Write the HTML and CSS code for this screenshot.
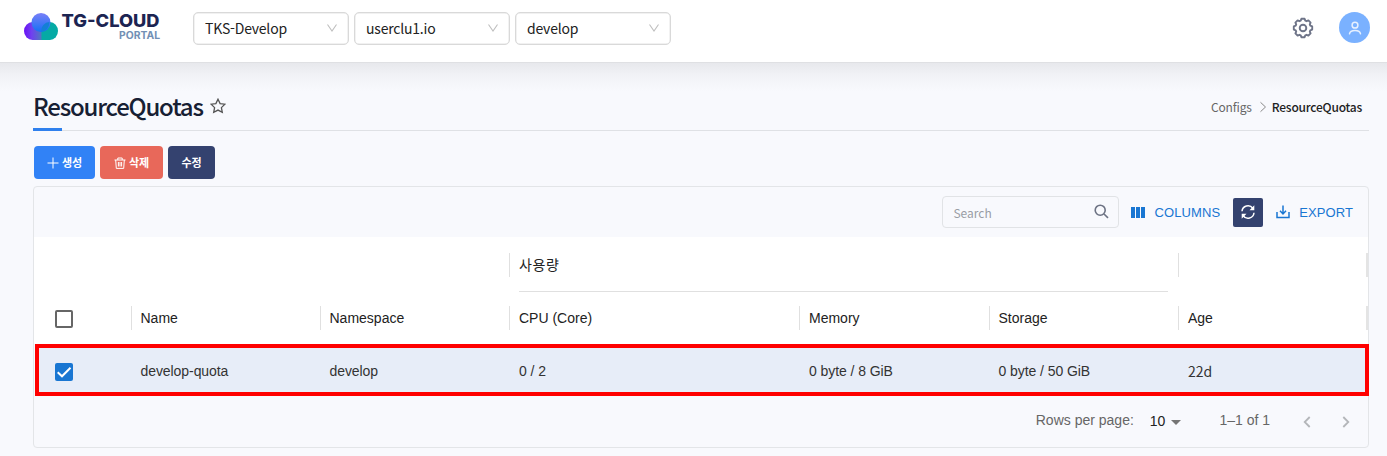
FILE: index.html
```html
<!DOCTYPE html>
<html lang="ko">
<head>
<meta charset="utf-8">
<title>ResourceQuotas</title>
<link rel="stylesheet" href="styles.css">
</head>
<body>
<header class="topbar">
  <svg class="logo" width="138" height="30" viewBox="0 0 138 30">
    <defs>
      <linearGradient id="lg1" x1="0" x2="1"><stop offset="0" stop-color="#6a10f5"/><stop offset=".4" stop-color="#7040f0"/><stop offset="1" stop-color="#4a80b8"/></linearGradient>
      <linearGradient id="lg2" x1="0" y1="0" x2="0" y2="1"><stop offset="0" stop-color="#7a80f8"/><stop offset="1" stop-color="#1470f5"/></linearGradient>
    </defs>
    <path d="M8.500 10H19V28H8.500A8.500 9 0 0 1 8.500 10Z" fill="url(#lg1)"/>
    <path d="M17.500 28V18L22 10H26A8 9 0 0 1 26 28Z" fill="#05aaa5"/>
    <circle cx="17" cy="10.500" r="9.500" fill="url(#lg2)"/>
    <path d="M17.200 19.800A8.500 9 0 0 1 25.500 10A9.500 9.500 0 0 1 17.200 19.800Z" fill="#147fd6"/>
    <text class="logo-name" x="37.500" y="14.800" textLength="98" lengthAdjust="spacingAndGlyphs">TG-CLOUD</text>
    <text class="logo-sub" x="95" y="26.800" textLength="41" lengthAdjust="spacingAndGlyphs">PORTAL</text>
  </svg>
  <div class="selects">
    <div class="select"><span>TKS-Develop</span><svg width="12" height="12" viewBox="0 0 12 12"><path d="M1.500 2.500L6 9L10.500 2.500"/></svg></div>
    <div class="select"><span>userclu1.io</span><svg width="12" height="12" viewBox="0 0 12 12"><path d="M1.500 2.500L6 9L10.500 2.500"/></svg></div>
    <div class="select"><span>develop</span><svg width="12" height="12" viewBox="0 0 12 12"><path d="M1.500 2.500L6 9L10.500 2.500"/></svg></div>
  </div>
  <svg class="gear" width="22" height="22" viewBox="0 0 22 22">
    <path d="M9.400 1.800h3.200l.7 1.900 1.300.5 1.800-.8 2.200 2.200-.8 1.800.5 1.300 1.900.7v3.200l-1.900.7-.5 1.300.8 1.800-2.200 2.200-1.800-.8-1.300.5-.7 1.900H9.400l-.7-1.900-1.300-.5-1.800.8-2.200-2.200.8-1.800-.5-1.300-1.900-.7V9.400l1.900-.7.5-1.300-.8-1.800 2.200-2.200 1.800.8 1.300-.5z"/>
    <circle cx="11" cy="11" r="3.300"/>
  </svg>
  <div class="avatar"><svg width="14" height="14" viewBox="0 0 14 14"><circle cx="7" cy="4.200" r="2.900"/><path d="M1.500 12.800C2.200 8.300 11.800 8.300 12.500 12.800"/></svg></div>
</header>
<main class="content">
  <div class="page-head">
    <h1>ResourceQuotas</h1>
    <svg class="star" width="16" height="16" viewBox="0 0 16 16"><path d="M8 1.200L10.100 5.600L14.900 6.200L11.400 9.600L12.300 14.400L8 12.100L3.700 14.400L4.600 9.600L1.100 6.200L5.900 5.600Z"/></svg>
    <nav class="crumbs"><span>Configs</span><svg width="8" height="12" viewBox="0 0 8 12"><path d="M1.500 1.300L6.500 6L1.500 10.700"/></svg><b>ResourceQuotas</b></nav>
  </div>
  <div class="actions">
    <button class="btn create"><svg width="12" height="12" viewBox="0 0 12 12"><path d="M6 .5V11.500M.5 6H11.500"/></svg><span>생성</span></button>
    <button class="btn remove"><svg width="12" height="12" viewBox="0 0 12 12"><path d="M.5 3H11.500M3.800 3V1H8.200V3M1.700 3L2.300 11.400H9.700L10.300 3M4.400 5V9.500M6 5V9.500M7.600 5V9.500"/></svg><span>삭제</span></button>
    <button class="btn edit"><span>수정</span></button>
  </div>
  <section class="card">
    <div class="toolbar">
      <div class="search"><span>Search</span><svg width="15" height="15" viewBox="0 0 15 15"><circle cx="6.200" cy="6.200" r="5"/><path d="M10 10L14 13.800"/></svg></div>
      <div class="tool columns"><svg width="14" height="11" viewBox="0 0 14 11"><path d="M0 0H4V11H0ZM5 0H9V11H5ZM10 0H14V11H10Z" fill="#1976d2"/></svg><span>COLUMNS</span></div>
      <div class="refresh"><svg width="16" height="16" viewBox="0 0 16 16"><path d="M2 7.200A6 6 0 0 1 12.800 4.200M14 8.800A6 6 0 0 1 3.200 11.800"/><path class="solid" d="M14.300 1.300V6.200H9.500ZM1.700 14.700V9.800H6.500Z"/></svg></div>
      <div class="tool export"><svg width="14" height="14" viewBox="0 0 14 14"><path d="M1 7V12.500H13V7M7 .5V8.500M4 5.800L7 8.900L10 5.800" fill="none" stroke="#1976d2" stroke-width="1.500"/></svg><span>EXPORT</span></div>
    </div>
    <div class="grid groups">
      <div class="blank"></div>
      <div class="cell sep group"><span>사용량</span></div>
      <div class="cell sep"></div>
    </div>
    <div class="grid heads">
      <div class="check"><svg width="18" height="18" viewBox="0 0 18 18"><rect x="1" y="1" width="16" height="16" rx="1" fill="none" stroke="#666" stroke-width="2"/></svg></div>
      <div class="cell sep">Name</div>
      <div class="cell sep">Namespace</div>
      <div class="cell sep">CPU (Core)</div>
      <div class="cell sep">Memory</div>
      <div class="cell sep">Storage</div>
      <div class="cell sep">Age</div>
    </div>
    <div class="grid row">
      <div class="check"><svg width="18" height="18" viewBox="0 0 18 18"><rect width="18" height="18" rx="2" fill="#1976d2"/><path d="M2.700 9.200L7 13.300L15.500 4.700" fill="none" stroke="#fff" stroke-width="2"/></svg></div>
      <div class="cell">develop-quota</div>
      <div class="cell">develop</div>
      <div class="cell">0 / 2</div>
      <div class="cell">0 byte / 8 GiB</div>
      <div class="cell">0 byte / 50 GiB</div>
      <div class="cell age">22d</div>
    </div>
    <footer class="pager">
      <span class="rpp">Rows per page:</span>
      <span class="size">10</span>
      <svg class="caret" width="10" height="5" viewBox="0 0 10 5"><path d="M0 0H10L5 5Z" fill="#757575"/></svg>
      <span class="range">1–1 of 1</span>
      <svg class="prev" width="8" height="12" viewBox="0 0 8 12"><path d="M6.700 1L1.700 6L6.700 11"/></svg>
      <svg class="next" width="8" height="12" viewBox="0 0 8 12"><path d="M1.300 1L6.300 6L1.300 11"/></svg>
    </footer>
  </section>
</main>
</body>
</html>
```
FILE: styles.css
```css
* { box-sizing: border-box; }
body { margin: 0; height: 456px; overflow: hidden; background: #f8f9fd; font-family: "Noto Sans CJK KR", "Noto Sans", sans-serif; }
svg { display: block; flex: none; }
.topbar { display: flex; align-items: flex-start; height: 63px; padding: 12px 17px 0 24px; background: #fff; border-bottom: 1px solid #dfe0e3; }
.logo { overflow: visible; }
.logo-name { font: 800 17.500px Inter, sans-serif; fill: #1c2452; }
.logo-sub { font: 700 10px Inter, sans-serif; fill: #7290b5; }
.selects { display: flex; gap: 5px; margin-left: 31px; }
.select { display: flex; align-items: center; justify-content: space-between; width: 156px; height: 33px; padding: 0 10px 2px 11px; border: 1px solid #d9d9d9; border-radius: 5px; box-shadow: inset 0 0 0 .5px #e4e4e4; font-size: 14px; line-height: 20px; letter-spacing: -.2px; color: #222; }
.select svg { margin-top: 1px; }
.select svg path { fill: none; stroke: #bfbfbf; stroke-width: 1.100; }
.gear { margin: 5px 0 0 auto; fill: none; stroke: #6e7488; stroke-width: 1.900; stroke-linejoin: round; }
.avatar { display: flex; align-items: center; justify-content: center; width: 31px; height: 31px; margin-left: 25px; border-radius: 50%; background: #7ab1ff; }
.avatar svg { fill: none; stroke: #e6f0ff; stroke-width: 1.500; stroke-linecap: round; margin-top: 1px; }
.content { height: 393px; padding: 25px 18px 0 33px; background: linear-gradient(#e7e8ec, #f1f2f6 12px, #f8f9fd 28px); }
.page-head { position: relative; display: flex; align-items: center; height: 43px; padding: 0 7px 5px 1px; border-bottom: 1px solid #dfe1e5; }
.page-head::after { content: ""; position: absolute; left: 0; bottom: -1px; width: 29px; height: 3px; background: #2f80ed; }
.page-head h1 { margin: -1px 0 0 -1px; font-size: 24px; line-height: 36px; font-weight: 500; letter-spacing: -1.200px; color: #172033; }
.star { margin: -1px 0 0 7px; fill: none; stroke: #555; stroke-width: 1.300; }
.crumbs { display: flex; align-items: center; margin: 1px 0 0 auto; font-size: 12px; line-height: 18px; letter-spacing: -.15px; color: #666; }
.crumbs svg { margin: 0 5px 0 7px; fill: none; stroke: #888; }
.crumbs b { font-weight: 500; letter-spacing: -.22px; color: #222; }
.actions { display: flex; gap: 5px; padding: 15px 0 0 1px; }
.btn { display: flex; align-items: center; justify-content: center; gap: 3px; height: 33px; padding: 0 0 1px; border: 0; border-radius: 4px; color: #fff; font: 700 11px "Noto Sans CJK KR", sans-serif; }
.btn svg { fill: none; stroke: #fff; margin-top: 1px; }
.create { width: 61px; background: #3182f6; }
.remove { width: 63px; background: #e8685a; }
.edit { width: 47px; background: #34426f; }
.card { height: 262px; margin-top: 7px; border: 1px solid #e3e5e8; border-radius: 4px; font: 14px "Liberation Sans", Arial, sans-serif; color: #222; }
.toolbar { display: flex; align-items: center; justify-content: flex-end; height: 50px; padding-right: 15px; }
.search { display: flex; align-items: center; justify-content: space-between; width: 177px; height: 32px; padding: 0 9px 0 10px; border: 1px solid #e1e3e6; border-radius: 4px; font: 12px "Noto Sans CJK KR", sans-serif; color: #999da5; }
.search svg { fill: none; stroke: #6c7283; stroke-width: 1.600; margin-top: -1px; }
.tool { display: flex; align-items: center; font-size: 13px; letter-spacing: .1px; color: #1976d2; }
.columns { gap: 9px; margin: 0 13px 0 12px; }
.refresh { display: flex; align-items: center; justify-content: center; width: 30px; height: 29px; margin-right: 13px; border-radius: 2px; background: #34426f; }
.refresh svg { fill: none; stroke: #fff; stroke-width: 1.500; }
.refresh .solid { fill: #fff; stroke: none; }
.export { gap: 9px; }
.grid { display: grid; grid-template-columns: 96.500px 189px 189.500px 290px 189.500px 189.500px 190px; align-items: center; background: #fff; }
.cell { position: relative; height: 24px; padding-left: 9px; line-height: 24px; white-space: nowrap; }
.sep { border-left: 1.500px solid #e0e0e0; }
.cell:last-child.sep::after { content: ""; position: absolute; right: 0; top: 0; width: 2px; height: 24px; background: #e4e4e4; }
.check { padding: 1px 0 0 20.500px; }
.groups { height: 55px; }
.blank { grid-column: 1 / 4; }
.group { grid-column: 4 / 7; line-height: 22px; letter-spacing: .6px; font-family: "Noto Sans CJK KR", sans-serif; }
.group::after { content: ""; position: absolute; left: 9px; right: 10px; top: 38px; height: 1px; background: #e0e0e0; }
.heads { height: 52px; }
.row { width: 1334px; height: 52px; margin-left: 1px; border: 4px solid #f00; background: #e7edf8; grid-template-columns: 92px 189px 189.500px 290px 189.500px 189.500px 1fr; }
.row .check { padding: 3px 0 0 15.500px; }
.row .cell { padding-left: 9.500px; line-height: 26px; letter-spacing: -.07px; color: #333; }
.row .age { font-family: "Noto Sans CJK KR", sans-serif; line-height: 27px; }
.pager { display: flex; align-items: center; justify-content: flex-end; height: 50px; padding: 0 18px 2px 0; color: #666; }
.rpp { margin-top: -1px; }
.size { margin-left: 16px; font-size: 14px; color: #222; padding-top: 2px; }
.caret { margin: 5px 38px 0 6px; }
.range { margin-top: -1px; }
.prev, .next { fill: none; stroke: #b4b6ba; stroke-width: 1.800; margin-top: 4px; }
.prev { margin-left: 33px; }
.next { margin-left: 31px; }
```
